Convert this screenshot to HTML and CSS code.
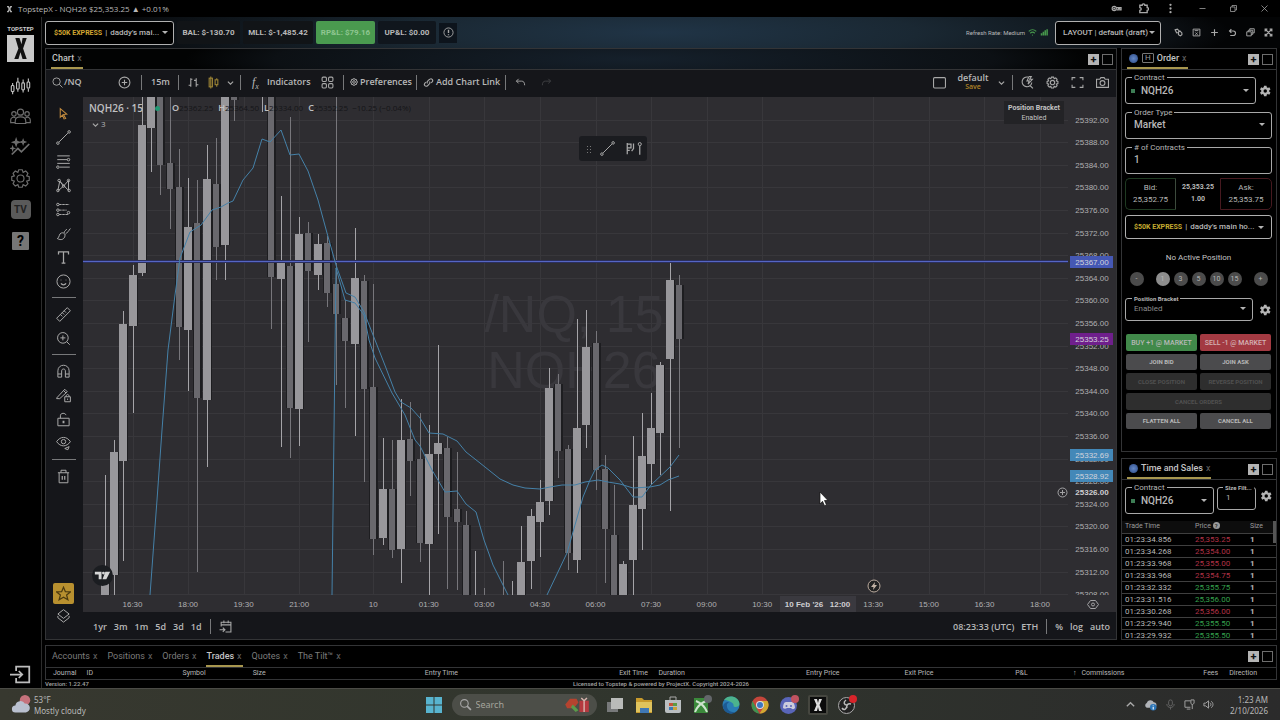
FILE: index.html
```html
<!DOCTYPE html>
<html lang="en">
<head>
<meta charset="UTF-8">
<meta name="viewport" content="width=device-width, initial-scale=1.0">
<title>TopstepX - NQH26</title>
<link rel="stylesheet" href="styles.css">
</head>
<body>

<svg class="sprite" aria-hidden="true">
  <symbol id="gear" viewBox="0 0 24 24"><path fill="currentColor" fill-rule="evenodd" d="M20.500 13.300a8.500 8.500 0 0 0 0-2.600l2.500-1.900-2.400-4.100-2.900 1.200a8.500 8.500 0 0 0-2.200-1.300L15 1.500h-5l-.5 3.100a8.500 8.500 0 0 0-2.200 1.300L4.400 4.700 2 8.800l2.500 1.900a8.500 8.500 0 0 0 0 2.600L2 15.200l2.400 4.100 2.900-1.200a8.500 8.500 0 0 0 2.200 1.300l.5 3.100h5l.5-3.100a8.500 8.500 0 0 0 2.200-1.300l2.900 1.200 2.400-4.100zM12.500 15.500a3.500 3.500 0 1 1 0-7 3.500 3.500 0 0 1 0 7z"/></symbol>
  <symbol id="cog" viewBox="0 0 24 24"><path d="M10 2h4l1 3 3-1.500 2.500 2.500L19 9l3 1v4l-3 1 1.500 3-2.500 2.500L15 19l-1 3h-4l-1-3-3 1.500L3.500 18 5 15l-3-1v-4l3-1-1.500-3L6 3.500 9 5z"/><circle cx="12" cy="12" r="4"/></symbol>
  <symbol id="chev" viewBox="0 0 8 8"><path d="M1 3l3 3 3-3"/></symbol>
</svg>

<header class="titlebar">
  <svg class="favicon" viewBox="0 0 8 10"><path fill="#aaa" d="M0 0h3l1 3 1-3h3v2H7L5.500 5 7 8h1v2H5L4 7l-1 3H0V8h1l1.500-3L1 2H0z"/></svg>
  <span>TopstepX - NQH26 $25,353.25 ▲ +0.01%</span>
  <div class="window-tools">
    <svg class="ico" viewBox="0 0 24 24"><g stroke-width="2.500"><circle cx="7" cy="12" r="4.500"/><circle cx="7" cy="12" r="1"/><path d="M11 10h11v5h-3v-3h-3v3h-4"/></g></svg>
    <svg class="ico" viewBox="0 0 24 24"><path stroke-width="3" d="M4 5h5c0-4 6-4 6 0h5v5c4 0 4 6 0 6v5H4v-5c4 0 4-6 0-6z"/></svg>
    <svg class="ico" viewBox="0 0 24 24"><g fill="currentColor" stroke="none"><circle cx="12" cy="4" r="2.500"/><circle cx="12" cy="12" r="2.500"/><circle cx="12" cy="20" r="2.500"/></g></svg>
    <svg class="ico win" viewBox="0 0 24 24"><path d="M4 12h16"/></svg>
    <svg class="ico win" viewBox="0 0 24 24"><path d="M4 8h12v12H4zM8 8V4h12v12h-4"/></svg>
    <svg class="ico win" viewBox="0 0 24 24"><path d="M4 4l16 16M20 4L4 20"/></svg>
  </div>
</header>

<div class="app">
  <nav class="sidebar">
    <a class="logo" href="#"><b>TOPSTEP</b><svg viewBox="0 0 26 26"><path fill="#c9c9c9" d="M0 0h26v26H0z"/><path fill="#111" d="M8 3h4l2 6 1-6h4l-3.500 10L19 23h-4l-2-6.500L11 23H7l4-10z"/></svg></a>
    <a href="#" aria-label="Chart"><svg class="ico lg hot" viewBox="0 0 24 24"><path d="M3 9v3m0 7v3M9 3v5m0 8v3m6-14v4m0 8v3m6-16v4m0 8v3"/><rect x="1.500" y="12" width="3" height="7" rx="1"/><rect x="7.500" y="8" width="3" height="8" rx="1"/><rect x="13.500" y="9" width="3" height="8" rx="1"/><rect x="19.500" y="8" width="3" height="7" rx="1"/></svg></a>
    <a href="#" aria-label="Community"><svg class="ico lg" viewBox="0 0 24 24"><circle cx="12" cy="7" r="3.500"/><circle cx="4.500" cy="9" r="2.500"/><circle cx="19.500" cy="9" r="2.500"/><path d="M6 20v-3c0-6 12-6 12 0v3zM6 19H.8v-3c0-3 3-4 5.500-2.500M18 19h5.200v-3c0-3-3-4-5.500-2.500"/></svg></a>
    <a href="#" aria-label="Insights"><svg class="ico lg" viewBox="0 0 24 24"><path stroke-width="2" d="M2 20l7-7 4 4 9-9"/><path fill="currentColor" d="M7 2l1 3 3 1-3 1-1 3-1-3-3-1 3-1zM15 3l.7 2 2 .7-2 .7-.7 2-.7-2-2-.7 2-.7zM3 11l.5 1.500 1.500.5-1.500.5L3 15l-.5-1.500L1 13l1.500-.5z"/></svg></a>
    <a href="#" aria-label="Settings"><svg class="ico lg" viewBox="0 0 24 24"><use href="#cog"/></svg></a>
    <a href="#" class="tv">TV</a>
    <a href="#" class="help">?</a>
    <a href="#" class="logout" aria-label="Log out"><svg class="ico lg hot" viewBox="0 0 24 24"><path stroke-width="2" d="M7 8V3h15v18H7v-5M0 12h14m-4-4l4 4-4 4"/></svg></a>
  </nav>

  <main class="workspace">
    <div class="topbar">
      <button class="picker account"><b>$50K EXPRESS</b><span>|</span><span>daddy's mai...</span><i class="caret"></i></button>
      <span class="stat">BAL: $-130.70</span>
      <span class="stat mll">MLL: $-1,485.42</span>
      <span class="stat green">RP&amp;L: $79.16</span>
      <span class="stat plain">UP&amp;L: $0.00</span>
      <button class="iconbtn" aria-label="Info"><svg class="ico" viewBox="0 0 24 24"><circle cx="12" cy="12" r="10"/><path stroke-width="3" d="M12 6v7m0 3v2"/></svg></button>
      <span class="rate">Refresh Rate: Medium</span>
      <svg class="ico signal" viewBox="0 0 24 24"><path stroke-width="3" d="M2 9c6-6 14-6 20 0M6 14c4-4 8-4 12 0M11 19h2"/></svg>
      <svg class="ico signal" viewBox="0 0 24 24"><path stroke-width="4" d="M4 20v-6m5 6V10m5 10V6m5 14V3"/></svg>
      <button class="picker layout">LAYOUT | default (draft)<i class="caret"></i></button>
      <div class="layout-tools">
        <button aria-label="Link"><svg class="ico" viewBox="0 0 24 24"><path stroke-width="3" d="M3 5l6-2 4 4-1 5-5 1zM12 11l4-3 5 5v5l-4 3-5-3z"/></svg></button>
        <button aria-label="Save"><svg class="ico" viewBox="0 0 24 24"><path stroke-width="2.500" d="M3 3h18v18H3zM7 7h10M9 12l6 6m0-6l-6 6"/></svg></button>
        <button aria-label="Add"><svg class="ico" viewBox="0 0 24 24"><path stroke-width="3" d="M12 3v18M3 12h18"/></svg></button>
        <button aria-label="Undo"><svg class="ico" viewBox="0 0 24 24"><path stroke-width="3" d="M9 3L4 8l5 5M4 8h10c8 0 8 12 0 12H6"/></svg></button>
        <button aria-label="Windows"><svg class="ico" viewBox="0 0 24 24"><path stroke-width="2.500" d="M2 10h12v11H2zM6 10V6h12v11h-4M10 6V2h12v11h-4"/></svg></button>
        <button aria-label="Fullscreen"><svg class="ico" viewBox="0 0 24 24"><path stroke-width="3" d="M3 9V3h6M15 3h6v6M21 15v6h-6M9 21H3v-6M4 4l16 16M20 4L4 20"/></svg></button>
      </div>
    </div>

    <div class="panels">
      <section class="panel chart-panel">
        <div class="panel-head glow">
          <a class="tab on" href="#">Chart <i>x</i></a>
          <button class="add">+</button><button class="max" aria-label="Maximize"></button>
        </div>
        <div class="toolbar">
          <button class="sym"><svg class="ico" viewBox="0 0 24 24"><circle cx="10" cy="10" r="8"/><path d="M16 16l7 7"/></svg>/NQ</button>
          <button class="cmp" aria-label="Compare"><svg class="ico md" viewBox="0 0 24 24"><circle cx="12" cy="12" r="10"/><path d="M12 7v10M7 12h10"/></svg></button>
          <hr>
          <button class="tf">15m</button>
          <hr>
          <button class="bars" aria-label="Bars"><svg class="ico md" viewBox="0 0 24 24"><path d="M7 4v16M3 17h4m0-11h3M17 4v16M13 8h4m0 8h4"/></svg></button>
          <button aria-label="Candles"><svg class="ico md gold" viewBox="0 0 24 24"><path d="M7 1v22M18 4v3m0 9v4"/><rect x="4" y="4" width="6" height="16"/><rect x="15" y="7" width="5" height="9"/></svg></button>
          <button aria-label="More"><svg class="ico sm" viewBox="0 0 8 8"><use href="#chev"/></svg></button>
          <hr>
          <button class="ind"><span class="fx">f<sub>x</sub></span>Indicators</button>
          <button class="tpl" aria-label="Templates"><svg class="ico md" viewBox="0 0 24 24"><rect x="2" y="2" width="8" height="8" rx="2"/><rect x="14" y="2" width="8" height="8" rx="2"/><rect x="2" y="14" width="8" height="8" rx="2"/><rect x="14" y="14" width="8" height="8" rx="2"/></svg></button>
          <hr>
          <button class="pref"><svg class="ico mini" viewBox="0 0 24 24"><use href="#cog"/></svg>Preferences</button>
          <hr>
          <button class="link"><svg class="ico" viewBox="0 0 24 24"><path stroke-width="2.500" d="M10 14c-3-3 0-5 2-7s5-5 8-2 0 6-2 8M14 10c3 3 0 5-2 7s-5 5-8 2 0-6 2-8"/></svg>Add Chart Link</button>
          <hr>
          <button class="undo" aria-label="Undo"><svg class="ico" viewBox="0 0 24 24"><path stroke-width="2" d="M8 4L3 9l5 5M3 9h11c5 0 7 3 7 9"/></svg></button>
          <button class="undo off" aria-label="Redo"><svg class="ico" viewBox="0 0 24 24"><path stroke-width="2" d="M16 4l5 5-5 5M21 9H10c-5 0-7 3-7 9"/></svg></button>
          <button class="sq" aria-label="Layout"><svg class="ico md" viewBox="0 0 24 24"><rect x="1" y="3" width="22" height="19" rx="2"/></svg></button>
          <button class="save">default<small>Save</small></button>
          <button aria-label="More layouts"><svg class="ico sm" viewBox="0 0 8 8"><use href="#chev"/></svg></button>
          <hr>
          <div class="right-tools">
            <button aria-label="Quick search"><svg class="ico md" viewBox="0 0 24 24"><path d="M13 2A9 9 0 1 0 20 12M17 18l5 5M15 1l-4 8h4l-2 6 8-9h-5l3-5z"/></svg></button>
            <button aria-label="Settings"><svg class="ico md" viewBox="0 0 24 24"><use href="#cog"/></svg></button>
            <button aria-label="Fullscreen"><svg class="ico md" viewBox="0 0 24 24"><path d="M2 8V3h6M16 3h6v5M22 16v5h-6M8 21H2v-5"/></svg></button>
            <button aria-label="Snapshot"><svg class="ico md" viewBox="0 0 24 24"><path d="M1 6h6l2-3h6l2 3h6v15H1z"/><circle cx="12" cy="13" r="4.500"/></svg></button>
          </div>
        </div>

        <div class="chart-body">
          <div class="drawbar">
            <button aria-label="Cursor"><svg class="ico md orange" viewBox="0 0 24 24"><path stroke-width="2" d="M6 3l12 10-6 1 4 7-3 1-3-7-4 4z"/></svg></button>
            <button aria-label="Trend line"><svg class="ico tool" viewBox="0 0 24 24"><circle cx="3" cy="21" r="2"/><circle cx="21" cy="3" r="2"/><path d="M5 19L19 5"/></svg></button>
            <button aria-label="Fibonacci"><svg class="ico tool" viewBox="0 0 24 24"><path d="M2 3h20M2 9h16M2 15h20M6 21h16"/><circle cx="20" cy="9" r="2"/><circle cx="3" cy="21" r="2"/></svg></button>
            <button aria-label="Patterns"><svg class="ico tool" viewBox="0 0 24 24"><path d="M3 20L6 5l12 13 3 2M6 5l6 8L20 4v15M4 20l8-7"/><circle cx="5" cy="4" r="2"/><circle cx="20" cy="4" r="2"/><circle cx="3" cy="20" r="2"/><circle cx="21" cy="20" r="2"/><circle cx="12" cy="13" r="2"/></svg></button>
            <button aria-label="Projection"><svg class="ico tool" viewBox="0 0 24 24"><path d="M5 4h16M5 13h12M5 20h14" stroke-dasharray="4 1"/><circle cx="3" cy="4" r="2"/><circle cx="3" cy="13" r="2"/><circle cx="3" cy="20" r="2"/><circle cx="20" cy="17" r="2"/></svg></button>
            <button aria-label="Brush"><svg class="ico tool" viewBox="0 0 24 24"><path d="M2 20c4-1 2-8 7-9s7 4 4 8-7 3-11 1zM13 11c1-5 3-3 4-6M15 13c3-2 5-5 8-9"/></svg></button>
            <button aria-label="Text"><svg class="ico tool" viewBox="0 0 24 24"><path stroke-width="2" d="M4 7V3h16v4M12 3v18M9 21h6"/></svg></button>
            <button aria-label="Emoji"><svg class="ico tool" viewBox="0 0 24 24"><circle cx="12" cy="12" r="10.500"/><path stroke-width="2" d="M8 9v1m8-1v1M8 15c2 3 6 3 8 0"/></svg></button>
            <hr>
            <button aria-label="Measure"><svg class="ico tool" viewBox="0 0 24 24"><path d="M1 18L18 1l5 5L6 23zM7 12l3 3m0-6l3 3m0-6l3 3"/></svg></button>
            <button aria-label="Zoom in"><svg class="ico tool" viewBox="0 0 24 24"><circle cx="11" cy="11" r="8.500"/><path d="M17 17l5 5M11 7v8M7 11h8"/></svg></button>
            <hr>
            <button aria-label="Magnet"><svg class="ico tool" viewBox="0 0 24 24"><path d="M3 21V11C3-1 21-1 21 11v10h-6V11c0-4-6-4-6 0v10zM3 16h6m6 0h6"/></svg></button>
            <button aria-label="Lock drawing"><svg class="ico tool" viewBox="0 0 24 24"><path d="M1 16L14 2l4 4L6 17H1zM12 4l4 4M14 14h9v8h-9zM16 14c0-5 5-5 5 0M18.500 17v2"/></svg></button>
            <button aria-label="Lock all"><svg class="ico tool" viewBox="0 0 24 24"><path d="M3 10h18v12H3zM7 10V6c0-5 8-5 9-1"/><path stroke-width="3" d="M12 14v4"/></svg></button>
            <button aria-label="Hide"><svg class="ico tool" viewBox="0 0 24 24"><path d="M1 9c6-9 16-9 22 0-6 9-16 9-22 0zM14 20l7-3-2 5z"/><circle cx="12" cy="9" r="3.500"/></svg></button>
            <hr>
            <button aria-label="Delete"><svg class="ico tool" viewBox="0 0 24 24"><path d="M3 6h18M8 6V2h8v4M5 6v16h14V6"/><path stroke-width="2" d="M10 11v6m4-6v6"/></svg></button>
            <button class="star" aria-label="Favorites"><svg class="ico tool" viewBox="0 0 24 24"><path stroke-width="2" d="M12 2l3 7 8 .5-6 5 2 7.500-7-4-7 4 2-7.500-6-5L9 9z"/></svg></button>
            <button class="layers" aria-label="Objects"><svg class="ico tool" viewBox="0 0 24 24"><path d="M12 1l9 7-9 7-9-7zM3 14l9 7 9-7M3 11v3m18-3v3"/></svg></button>
          </div>

          <div class="chart-main">
            <div class="chart-stage">
              <svg id="chart" viewBox="0 0 1033 515" role="img" aria-label="NQH26 15 minute candles"></svg>
              <div class="legend">
                <div class="row"><span class="name">NQH26 · 15</span><i class="dot"></i><span class="ohlc"><b>O</b>25362.25</span><span class="ohlc"><b>H</b>25364.50</span><span class="ohlc"><b>L</b>25334.00</span><span class="ohlc"><b>C</b>25352.25 &nbsp;−10.25 (−0.04%)</span></div>
                <button class="count"><svg class="ico sm" viewBox="0 0 8 8"><use href="#chev"/></svg>3</button>
              </div>
              <div class="float-tools">
                <i class="grip"></i>
                <svg class="ico tool" viewBox="0 0 24 24"><circle cx="3" cy="21" r="2"/><circle cx="21" cy="3" r="2"/><path d="M5 19L19 5"/></svg>
                <svg class="ico tool wide" viewBox="0 0 28 24"><path stroke-width="2" d="M4 3v18M4 5h6v6H4M4 15h4M14 4v8l-3 4M24 8v14"/><circle cx="24" cy="5" r="2.500"/></svg>
              </div>
              <div class="bracket-note"><b>Position Bracket</b>Enabled</div>
              <svg class="tvmark" viewBox="0 0 22 22"><circle cx="11" cy="11" r="11" fill="#1b1d21"/><path fill="#d6d6d6" d="M3 7h7v8H7v-5H3zM14 7h5l-4 8h-4z"/><circle cx="12" cy="8.500" r="1.500" fill="#d6d6d6"/></svg>
              <svg class="flash" viewBox="0 0 14 14"><circle cx="7" cy="7" r="6" fill="#222" stroke="#b9a99c"/><path fill="#c4b4a6" d="M8 3L4 8h2.500L6 11l4-5H7.500z"/></svg>
              <svg class="pointer" viewBox="0 0 10 14"><path fill="#fff" stroke="#111" stroke-width=".7" d="M1 0l8 8.500H5.500L7.500 13l-2 .8-2-4.500L1 12z"/></svg>
            </div>
            <div class="rangebar">
              <button>1yr</button><button>3m</button><button>1m</button><button>5d</button><button>3d</button><button>1d</button>
              <hr>
              <button aria-label="Go to date"><svg class="ico md" viewBox="0 0 24 24"><path d="M4 12V4h18v18H12M4 9h18M9 1v5m8-5v5M1 18h9m-3-4l4 4-4 4"/></svg></button>
              <span class="clock">08:23:33 (UTC)</span><button>ETH</button>
              <hr>
              <button>%</button><button>log</button><button>auto</button>
            </div>
          </div>
        </div>
      </section>

      <div class="side">
        <section class="panel order">
          <div class="panel-head">
            <a class="tab on" href="#"><i class="globe"></i><i class="hbox">H</i>Order <i>x</i></a>
            <button class="add">+</button><button class="max" aria-label="Maximize"></button>
          </div>
          <div class="order-body">
            <div class="line">
              <div class="field has-dot"><label for="contract">Contract</label><select id="contract"><option>NQH26</option></select><i class="caret"></i></div>
              <button class="gear" aria-label="Contract settings"><svg viewBox="0 0 24 24"><use href="#gear"/></svg></button>
            </div>
            <div class="field"><label for="otype">Order Type</label><select id="otype"><option>Market</option></select><i class="caret"></i></div>
            <div class="field"><label for="qty"># of Contracts</label><input id="qty" type="text" value="1"></div>
            <div class="quote">
              <div class="bid">Bid:<span>25,352.75</span></div>
              <div class="last">25,353.25<span>1.00</span></div>
              <div class="ask">Ask:<span>25,353.75</span></div>
            </div>
            <button class="picker account"><b>$50K EXPRESS</b><span>|</span><span>daddy's main ho...</span><i class="caret"></i></button>
            <p class="nopos">No Active Position</p>
            <div class="sizes">
              <button class="minus">-</button><button class="cur">1</button><button>3</button><button>5</button><button>10</button><button>15</button><button class="plus">+</button>
            </div>
            <div class="line bracket">
              <div class="field small"><label for="bracket">Position Bracket</label><select id="bracket"><option>Enabled</option></select><i class="caret"></i></div>
              <button class="gear" aria-label="Bracket settings"><svg viewBox="0 0 24 24"><use href="#gear"/></svg></button>
            </div>
            <div class="actions">
              <button class="buy">BUY +1 @ MARKET</button><button class="sell">SELL -1 @ MARKET</button>
              <button>JOIN BID</button><button>JOIN ASK</button>
              <button class="low" disabled>CLOSE POSITION</button><button class="low" disabled>REVERSE POSITION</button>
              <button class="low full" disabled>CANCEL ORDERS</button>
              <button>FLATTEN ALL</button><button>CANCEL ALL</button>
            </div>
          </div>
        </section>

        <section class="panel sales">
          <div class="panel-head">
            <a class="tab on" href="#"><i class="globe"></i>Time and Sales <i>x</i></a>
            <button class="add">+</button><button class="max" aria-label="Maximize"></button>
          </div>
          <div class="line sales-filter">
            <div class="field has-dot"><label for="contract2">Contract</label><select id="contract2"><option>NQH26</option></select><i class="caret"></i></div>
            <div class="field small filt"><label for="sizef">Size Filt...</label><input id="sizef" type="text" value="1"></div>
            <button class="gear" aria-label="Settings"><svg viewBox="0 0 24 24"><use href="#gear"/></svg></button>
          </div>
          <div class="tape">
            <table>
              <thead><tr><th>Trade Time</th><th>Price <i class="q">?</i></th><th>Size</th></tr></thead>
              <tbody>
                <tr><td>01:23:34.856</td><td class="dn">25,353.25</td><td>1</td></tr>
                <tr><td>01:23:34.268</td><td class="dn">25,354.00</td><td>1</td></tr>
                <tr><td>01:23:33.968</td><td class="dn">25,355.00</td><td>1</td></tr>
                <tr><td>01:23:33.968</td><td class="dn">25,354.75</td><td>1</td></tr>
                <tr><td>01:23:32.332</td><td class="up">25,355.75</td><td>1</td></tr>
                <tr><td>01:23:31.516</td><td class="up">25,356.00</td><td>1</td></tr>
                <tr><td>01:23:30.268</td><td class="dn">25,356.00</td><td>1</td></tr>
                <tr><td>01:23:29.940</td><td class="up">25,355.50</td><td>1</td></tr>
                <tr><td>01:23:29.932</td><td class="up">25,355.50</td><td>1</td></tr>
              </tbody>
            </table>
            <i class="thumb"></i>
          </div>
        </section>
      </div>
    </div>

    <section class="panel bottom">
      <div class="panel-head">
        <a class="tab" href="#">Accounts <i>x</i></a>
        <a class="tab" href="#">Positions <i>x</i></a>
        <a class="tab" href="#">Orders <i>x</i></a>
        <a class="tab on" href="#">Trades <i>x</i></a>
        <a class="tab" href="#">Quotes <i>x</i></a>
        <a class="tab" href="#">The Tilt™ <i>x</i></a>
        <button class="add">+</button><button class="max" aria-label="Maximize"></button>
      </div>
      <table class="trades">
        <thead><tr><th>Journal</th><th>ID</th><th>Symbol</th><th>Size</th><th>Entry Time</th><th>Exit Time</th><th>Duration</th><th>Entry Price</th><th>Exit Price</th><th>P&amp;L</th><th><span class="sort">↑</span>Commissions</th><th>Fees</th><th>Direction</th></tr></thead>
      </table>
    </section>
    <footer class="foot"><span>Version: 1.22.47</span><span>Licensed to Topstep &amp; powered by ProjectX. Copyright 2024-2026</span><span></span></footer>
  </main>
</div>

<div class="taskbar">
  <div class="weather">
    <svg viewBox="0 0 24 24"><circle cx="16" cy="7" r="6" fill="#c5727c"/><path fill="#b9c0cf" d="M5 21a4 4 0 0 1 0-8 6 6 0 0 1 11-2 5 5 0 0 1 1 10z"/></svg>
    <div>53°F<br>Mostly cloudy</div>
  </div>
  <div class="apps">
    <svg viewBox="0 0 20 20"><path fill="#58b4cf" d="M2 2h7.500v7.500H2zM10.500 2H18v7.500h-7.500zM2 10.500h7.500V18H2zM10.500 10.500H18V18h-7.500z"/></svg>
    <div class="search">
      <svg class="ico md" viewBox="0 0 24 24"><circle cx="10" cy="10" r="7"/><path stroke-width="3" d="M15 15l7 7"/></svg>
      <input type="text" placeholder="Search" aria-label="Search">
      <svg class="gift" viewBox="0 0 28 18"><path fill="#b5432f" d="M1 9l5-6h7l2 4-5 6H3z"/><path fill="#5a9a4a" d="M9 9l6 6-3 2-5-5z"/><path fill="#b53a40" d="M16 5h10v12H16z"/><path stroke="#d8b5ae" stroke-width="1.500" fill="none" d="M21 5v12M18 2l3 3 3-3"/></svg>
    </div>
    <svg viewBox="0 0 20 20"><path fill="#77797a" d="M2 7h11v10H2z"/><path fill="#b9bbb9" d="M6 3h12v11H6z"/></svg>
    <svg viewBox="0 0 20 20"><path fill="#c79a2c" d="M2 3h6l2 2h8v13H2z"/><path fill="#dfc35d" d="M2 7h16v10H2z"/><path fill="#3f78b5" d="M6 13h9v5H6z"/></svg>
    <svg viewBox="0 0 20 20"><path fill="#b9bec0" d="M2 5h16v11q0 2-2 2H4q-2 0-2-2z"/><path fill="none" stroke="#aaa" d="M7 5V2h6v3"/><path fill="#c65338" d="M6 8h4v3H6z"/><path fill="#5d9a42" d="M10 8h4v3h-4z"/><path fill="#3a79b4" d="M6 12h4v3H6z"/><path fill="#c9a23a" d="M10 12h4v3h-4z"/></svg>
    <svg viewBox="0 0 20 20"><path fill="#3b8a3b" d="M2 3h14v15H2z"/><path stroke="#cfe3cf" stroke-width="2" fill="none" d="M3 17C5 12 9 8 14 6M4 6c5 2 9 6 11 11"/><circle cx="16" cy="4" r="4" fill="#63666a"/></svg>
    <svg viewBox="0 0 20 20"><circle cx="10" cy="10" r="8.500" fill="#2a7cb4"/><path fill="#4cb38d" d="M3 5c4-6 15-4 15.500 4 0 3-5 4-6 2 1-3-5-6-9.500-6z"/><path fill="#1d5a94" d="M6 9c-1 6 4 9 9 8-6 4-12 0-13-5 0-3 2-5 6-5z"/></svg>
    <svg viewBox="0 0 20 20"><circle cx="10" cy="10" r="8.500" fill="#c4463b"/><path fill="#3f9150" d="M2.500 6l5 9 2 3.500A8.500 8.500 0 0 1 2.500 6z"/><path fill="#d0a932" d="M10 6h7.500a8.500 8.500 0 0 1-8 12.500l4-6z"/><circle cx="10" cy="10" r="4" fill="#ddd"/><circle cx="10" cy="10" r="3" fill="#3c75c0"/></svg>
    <svg viewBox="0 0 20 20"><circle cx="9.500" cy="10.500" r="8.500" fill="#5965b8"/><path fill="#ccd" d="M4 13c0-3 1-6 3-6h6c2 0 3 4 3 6-2 2-3 1-4 0H8c-1 1-3 1-4 0z"/><circle cx="7.500" cy="11" r="1" fill="#5965b8"/><circle cx="12" cy="11" r="1" fill="#5965b8"/><circle cx="16" cy="4" r="4" fill="#c05360"/></svg>
    <svg class="running" viewBox="0 0 20 20"><path fill="#0b0b0b" d="M2 2h16v16H2z"/><path fill="#ddd" d="M6 4h3l1 4 1-4h3l-2.500 6L14 16h-3l-1-4-1 4H6l2.500-6z"/></svg>
    <svg viewBox="0 0 20 20"><circle cx="9.500" cy="10.500" r="8" fill="#222" stroke="#aaa"/><path fill="none" stroke="#bbb" stroke-width="1.500" d="M9 5c-3 2-2 5 1 5M14 9c-3-1-5 1-4 4M5 13c2 3 5 1 5-3"/><circle cx="16" cy="4" r="4" fill="#d8242a"/></svg>
  </div>
  <div class="tray">
    <svg class="ico" viewBox="0 0 24 24"><path stroke-width="3" d="M4 16l8-8 8 8"/></svg>
    <svg class="cloud" viewBox="0 0 24 24"><path fill="#b0b3b8" d="M5 18a5 5 0 0 1 0-9 7 7 0 0 1 13-1 5 5 0 0 1 0 10z"/><circle cx="17" cy="17" r="6" fill="#2d76b8"/><path stroke="#fff" stroke-width="2" d="M17 13v1m0 2v5"/></svg>
    <svg class="ico dim" viewBox="0 0 24 24"><rect x="8" y="2" width="8" height="13" rx="4"/><path stroke-width="2" d="M4 11c0 10 16 10 16 0M12 18v5"/></svg>
    <svg class="ico" viewBox="0 0 24 24"><path stroke-width="2" d="M14 4H2v14h12M6 22h8M18 22v-9M15 2h7v7l-4 4-3-4z"/></svg>
    <svg class="ico" viewBox="0 0 24 24"><path stroke-width="2" d="M2 9v6h4l6 5V4L6 9zM15 8c3 2 3 6 0 8M18 5c5 4 5 10 0 14"/></svg>
    <div class="date">1:23 AM<br>2/10/2026</div>
  </div>
</div>

<script src="script.js"></script>
</body>
</html>
```
FILE: styles.css
```css
* {
  box-sizing: border-box;
}

body {
  margin: 0;
  min-height: 100vh;
  display: flex;
  flex-direction: column;
  background: #000;
  color: #b8b8b8;
  font-family: Roboto, sans-serif;
  font-size: 8px;
  line-height: 12px;
}

button {
  font: inherit;
  color: inherit;
  background: none;
  border: 0;
  padding: 0;
}

a {
  color: inherit;
  text-decoration: none;
}

hr {
  border: 0;
  margin: 0;
  background: #77787a;
}

i {
  font-style: normal;
}

.sprite {
  display: none;
}

/* icons */
.ico {
  display: block;
  width: 11px;
  height: 11px;
  flex: none;
  fill: none;
  stroke: currentColor;
  stroke-width: 2;
  color: #a8a8a8;
}
.ico.md { width: 13px; height: 13px; }
.ico.tool { width: 15px; height: 15px; stroke-width: 1.6; }
.ico.wide { width: 19px; }
.ico.lg { width: 21px; height: 21px; stroke-width: 1.3; color: #6e6e6e; }
.ico.hot { color: #bdbdbd; }
.ico.sm { width: 7px; height: 7px; stroke-width: 1.3; }
.ico.mini { width: 8px; height: 8px; stroke-width: 3; }
.ico.gold { color: #9c8435; }
.ico.orange { color: #c08a3e; }
.ico.dim { color: #666; }

.caret {
  border: 3px solid transparent;
  border-top-color: #b4b4b4;
  border-bottom: 0;
  flex: none;
}

/* window title */
.titlebar {
  height: 17px;
  display: flex;
  align-items: center;
  padding: 0 11px 0 7px;
  gap: 6px;
  font-family: "Open Sans", sans-serif;
}
.favicon { width: 5px; height: 8px; }
.window-tools { margin-left: auto; display: flex; gap: 16px; }
.window-tools .ico { width: 11px; }
.window-tools .win { width: 9px; margin-left: 6px; }

.app {
  flex: 1;
  display: grid;
  grid-template-columns: 42px 1fr;
}

.sidebar {
  border-right: 1px solid #2c2c2c;
  display: flex;
  flex-direction: column;
  align-items: center;
  padding-top: 6px;
  gap: 10px;
}
.sidebar .logo {
  display: flex;
  flex-direction: column;
  align-items: center;
  margin-bottom: 3px;
}
.logo b { font-size: 6px; color: #ccc; line-height: 12px; }
.logo svg { width: 27px; height: 27px; }
.sidebar .tv,
.sidebar .help {
  width: 20px;
  height: 19px;
  border-radius: 4px;
  background: #5a5a5a;
  color: #222;
  font-size: 10px;
  font-weight: bold;
  line-height: 19px;
  text-align: center;
  margin-top: 1px;
}
.sidebar .help { width: 17px; height: 18px; border-radius: 1px; color: #000; font-size: 14px; background: #767676; margin-top: 3px; }
.sidebar .logout { margin-top: auto; margin-bottom: 3px; }

.workspace {
  padding: 0 3px;
  display: flex;
  flex-direction: column;
  min-width: 0;
}

/* top bar */
.topbar {
  height: 31px;
  margin: 0 -3px;
  padding: 0 7px 0 3px;
  display: flex;
  align-items: center;
  gap: 3px;
  background: radial-gradient(ellipse 46% 200% at 50% 50%, #203446, #1a2833 45%, #0b0f13 90%, #030405);
  font-weight: bold;
  white-space: nowrap;
}
.picker {
  height: 24px;
  border: 1px solid #b0b0b0;
  border-radius: 3px;
  background: #000;
  display: flex;
  align-items: center;
  gap: 3px;
  padding: 0 7px 0 8px;
  font-weight: 500;
  white-space: nowrap;
}
.picker .caret { margin-left: auto; }
.account { width: 129px; }
.account b { color: #d2a632; font-size: 7px; }
.stat {
  height: 23px;
  width: 63px;
  line-height: 23px;
  text-align: center;
  background: #111417;
  border-radius: 2px;
}
.stat.mll { width: 70px; }
.stat.green { width: 59px; background: #4a9a4f; color: #8fc691; }
.stat.plain { width: 58px; background: #10161d; }
.iconbtn { width: 18px; height: 20px; background: #0d141c; display: grid; place-items: center; }
.rate { margin-left: auto; font-size: 6px; font-weight: normal; }
.ico.signal { width: 9px; height: 9px; color: #47984c; }
.layout { width: 106px; margin: 0 10px 0 3px; padding: 0 5px 0 7px; gap: 1px; }
.layout-tools { display: flex; gap: 9px; }
.layout-tools .ico { width: 9px; height: 9px; }

/* panels */
.panels {
  display: grid;
  grid-template-columns: 1fr 156px;
  gap: 4px;
}
.panel { border: 1px solid #333436; min-width: 0; }
.panel-head {
  height: 21px;
  display: flex;
  align-items: center;
  gap: 3px;
  padding-right: 3px;
  border-bottom: 1px solid #333436;
  font-size: 9px;
}
.glow { background: radial-gradient(ellipse 42% 200% at 55% 50%, #15202b, #0c1014 80%, #020303); }
.tab {
  align-self: stretch;
  display: flex;
  align-items: center;
  gap: 3px;
  margin-left: 5px;
  padding: 0 1px;
  color: #7c7c7c;
  border-bottom: 2px solid transparent;
}
.tab.on { color: #c4c4c4; border-bottom-color: #a8974f; font-weight: 500; }
.tab i { color: #666; font-weight: normal; }
.tab .globe { width: 9px; height: 9px; border-radius: 50%; margin-left: 1px; background: radial-gradient(#6386c4, #2c4b86); }
.tab .hbox { border: 1px solid #777; border-radius: 1px; font-size: 8px; line-height: 8px; padding: 0 2px; margin-left: 1px; color: #999; }
.add {
  margin-left: auto;
  width: 11px;
  height: 11px;
  background: #b4b4b4;
  color: #111;
  font-weight: bold;
  font-size: 11px;
  line-height: 11px;
}
.max { width: 11px; height: 11px; border: 1px solid #6d6d6d; }

/* chart */
.chart-panel { background: #15161a; display: flex; flex-direction: column; }
.toolbar,
.rangebar {
  height: 27px;
  display: flex;
  align-items: center;
  font-family: "Open Sans", sans-serif;
  font-size: 9px;
  font-weight: 600;
}
.toolbar hr,
.rangebar hr { width: 1px; height: 15px; }
.toolbar button { display: flex; align-items: center; }
.toolbar { padding: 0 0 3px 6px; white-space: nowrap; }
.toolbar .sym { gap: 1px; width: 66px; }
.toolbar .cmp { width: 23px; }
.toolbar .tf { width: 36px; padding-left: 9px; }
.toolbar .bars { margin: 0 7px 0 8px; }
.toolbar .bars + button { margin-right: 7px; }
.toolbar .bars + button + button { margin-right: 6px; }
.fx { font: italic 12px/12px "Liberation Serif", serif; width: 15px; text-align: left; }
.fx sub { font-size: 8px; line-height: 0; }
.toolbar .ind { margin-left: 11px; width: 69px; }
.toolbar .tpl { margin-right: 9px; }
.toolbar .pref { width: 72px; padding-left: 6px; gap: 2px; }
.toolbar .link { width: 88px; padding-left: 6px; gap: 2px; }
.toolbar .undo { margin-left: 9px; width: 17px; }
.toolbar .off { opacity: .3; }
.toolbar .sq { margin-left: auto; }
.toolbar .save { flex-direction: column; width: 30px; margin: 0 10px 0 12px; line-height: 10px; }
.save small { font-size: 7px; line-height: 8px; color: #b08326; }
.toolbar .save + button { margin-right: 7px; }
.right-tools { display: flex; gap: 12px; padding: 0 7px 0 8px; }

.chart-body { display: flex; }
.drawbar {
  width: 37px;
  padding: 4px 2px 11px 0;
  display: flex;
  flex-direction: column;
  align-items: center;
}
.drawbar button { width: 24px; height: 24px; display: grid; place-items: center; }
.drawbar hr { width: 24px; height: 1px; margin: 4px 0; }
.drawbar .star { margin-top: auto; width: 21px; height: 21px; background: #b8902f; border-radius: 2px; }
.star .ico { color: #4b3a10; }
.chart-main { flex: 1; min-width: 0; }
.chart-stage { position: relative; background: #2e2d31; }
.chart-stage #chart { display: block; width: 100%; height: auto; }
#chart text { font-family: "Liberation Sans", sans-serif; font-size: 8px; fill: #b0b0b2; text-anchor: middle; }
#chart .now { font-weight: bold; fill: #cfcfd2; }
#chart .tag { fill: #d4d4dc; }
#chart .mark { font-size: 52px; fill: #39383d; }

.legend {
  position: absolute;
  left: 6px;
  top: 4px;
  font-family: "Open Sans", sans-serif;
}
.legend .row { display: flex; align-items: center; gap: 8px; line-height: 14px; }
.legend .name { font-weight: 600; font-size: 10px; width: 58px; white-space: nowrap; color: #c0c0c2; }
.legend .dot { width: 5px; height: 5px; border-radius: 50%; background: #239874; margin-right: 4px; }
.legend .ohlc { color: #151518; white-space: nowrap; margin-right: -3px; }
.legend .ohlc b { color: #c0c0c2; font-size: 9px; font-weight: 600; }
.legend .count { display: flex; align-items: center; gap: 2px; margin: 3px; }

.float-tools {
  position: absolute;
  left: 48%;
  top: 39px;
  width: 68px;
  height: 25px;
  background: #1b1c20;
  border-radius: 3px;
  display: flex;
  align-items: center;
  justify-content: space-between;
  padding: 0 4px 0 7px;
}
.grip { width: 5px; height: 8px; background: radial-gradient(circle, #777 1px, transparent 1px) 0 0 / 3px 3px; }
.bracket-note {
  position: absolute;
  right: 52px;
  top: 4px;
  width: 60px;
  height: 23px;
  background: #232326;
  font-size: 7px;
  line-height: 10px;
  text-align: center;
  padding-top: 2px;
  color: #c4c4c4;
}
.bracket-note b { display: block; white-space: nowrap; }
.tvmark { position: absolute; left: 9px; top: 468px; width: 21px; }
.flash { position: absolute; left: 784px; top: 482px; width: 14px; }
.pointer { position: absolute; left: 736px; top: 395px; width: 10px; }

.rangebar { padding: 2px 6px 0 10px; gap: 7px; }
.rangebar hr { margin: 0 1px; }
.rangebar .clock { margin-left: auto; }

/* order panel */
.side { display: flex; flex-direction: column; gap: 6px; }
.order { flex: 1; }
.order-body { padding: 7px 4px 0 3px; }
.line { display: flex; align-items: center; gap: 2px; }
.field {
  position: relative;
  flex: 1;
  min-width: 0;
  height: 27px;
  margin-bottom: 8px;
  border: 1px solid #a8a8a8;
  border-radius: 3px;
  display: flex;
  align-items: center;
  padding: 0 6px 2px 8px;
}
.field label {
  position: absolute;
  left: 6px;
  top: -6px;
  padding: 0 2px;
  background: #000;
  line-height: 11px;
  white-space: nowrap;
}
.field select,
.field input {
  appearance: none;
  flex: 1;
  width: 100%;
  min-width: 0;
  border: 0;
  padding: 0;
  background: none;
  color: #b8b8b8;
  font: 500 10px/14px Roboto, sans-serif;
}
.has-dot { gap: 6px; padding: 0 6px 0 5px; }
.has-dot::before { content: ""; width: 4px; height: 4px; background: #3d7d54; }
.gear { width: 14px; color: #b4b4b4; margin-bottom: 8px; padding-left: 1px; }
.gear svg { display: block; width: 12px; height: 12px; }
.field.small { height: 23px; }
.field.small label { font-size: 6px; font-weight: bold; }
.field.small select { font-size: 8px; font-weight: normal; color: #8b8b8b; }
.quote { display: grid; grid-template-columns: 51px 1fr 52px; height: 32px; text-align: center; margin-top: -4px; }
.quote span { display: block; }
.quote div { padding-top: 3px; }
.bid { border: 1px solid #1f3a22; border-right-color: #3c4a3c; border-radius: 5px 0 0 5px; }
.ask { border: 1px solid #46191f; border-radius: 0 5px 5px 0; }
.last { font-weight: bold; font-size: 7px; }
.order .account { width: 100%; margin-top: 5px; }
.order .account b { color: #c5ab31; }
.nopos { margin: 13px 0 8px; text-align: center; font-size: 8px; color: #c4c4c4; }
.sizes { display: flex; gap: 4px; justify-content: center; margin-bottom: 12px; }
.sizes button { width: 14px; height: 14px; border-radius: 50%; background: #4b4b4b; line-height: 14px; font-size: 7px; }
.sizes .cur { background: #8d8d8d; }
.sizes .minus { margin-right: 8px; }
.sizes .plus { margin-left: 8px; }
.bracket { gap: 5px; }
.actions { display: grid; grid-template-columns: 1fr 1fr; gap: 3px; padding: 5px 1px 0; }
.actions button { height: 16px; border-radius: 2px; background: #4b4b4d; font-size: 6px; font-weight: bold; white-space: nowrap; }
.actions .buy, .actions .sell { height: 17px; font-size: 7px; font-weight: 500; }
.actions .buy { background: #41894a; }
.actions .sell { background: #a33a42; color: #d4b2b4; }
.actions .low { height: 17px; background: #2e2e2e; color: #505050; }
.actions .full { grid-column: 1 / 3; }

/* time and sales */
.sales { height: 182px; overflow: hidden; }
.sales-filter { padding: 7px 3px 0 3px; gap: 3px; align-items: flex-start; }
.sales-filter .field { margin-bottom: 7px; }
.sales-filter .filt { flex: none; width: 39px; }
.sales-filter .filt label { left: 5px; }
.sales-filter .gear { margin-top: 3px; }
.filt input { font-size: 8px; font-weight: normal; }
.tape { position: relative; }
.tape table { width: 100%; border-collapse: collapse; table-layout: fixed; }
.tape th { height: 12px; padding: 0 0 0 3px; text-align: left; font-weight: normal; font-size: 7px; line-height: 11px; color: #9b9b9b; background: #0d0d0d; }
.tape td { height: 12px; padding: 0 0 0 3px; border-top: 1px solid #3f3f3f; line-height: 11px; }
.tape th:nth-child(1) { width: 70px; }
.tape th:nth-child(2) { width: 55px; }
.tape td:nth-child(3) { font-weight: bold; }
.q { display: inline-block; width: 7px; height: 7px; border-radius: 50%; background: #999; color: #000; font-size: 6px; line-height: 7px; text-align: center; }
.tape .dn { color: #b23246; }
.tape .up { color: #35a04d; }
.thumb { position: absolute; right: 0; top: 0; width: 3px; height: 22px; background: #555; }

/* bottom */
.bottom { margin-top: 5px; }
.bottom .panel-head { height: 22px; }
.trades { width: 100%; border-collapse: collapse; table-layout: fixed; }
.trades th { height: 11px; padding: 0; text-align: left; font-size: 7px; font-weight: normal; line-height: 11px; color: #b8b8b8; white-space: nowrap; }
.trades th:nth-child(1) { width: 3.3%; padding-left: 7px; }
.trades th:nth-child(2) { width: 7.8%; }
.trades th:nth-child(3) { width: 5.7%; }
.trades th:nth-child(4) { width: 14%; }
.trades th:nth-child(5) { width: 15.8%; }
.trades th:nth-child(6) { width: 3.2%; }
.trades th:nth-child(7) { width: 12%; }
.trades th:nth-child(8) { width: 8%; }
.trades th:nth-child(9) { width: 9%; }
.trades th:nth-child(10) { width: 4.7%; }
.trades th:nth-child(11) { width: 10.6%; }
.trades th:nth-child(12) { width: 2.1%; }
.sort { font-weight: bold; margin-right: 5px; }

.foot { display: grid; grid-template-columns: 1fr auto 1fr; font-size: 6px; line-height: 7px; color: #a4a4a4; font-weight: 500; }

/* taskbar */
.taskbar {
  height: 32px;
  display: grid;
  grid-template-columns: 1fr auto 1fr;
  align-items: center;
  background: linear-gradient(90deg, #37382f, #30352d 50%, #2b2b2b);
  border-top: 1px solid #4b4b46;
  font: 8px/11px "Noto Sans", sans-serif;
}
.weather { display: flex; gap: 2px; align-items: center; padding-left: 11px; }
.weather svg { width: 21px; height: 21px; }
.apps { display: flex; align-items: center; gap: 9px; }
.apps > svg { width: 20px; height: 20px; }
.apps .running { background: #45463f; border-radius: 2px; }
.search { width: 145px; height: 22px; border-radius: 11px; background: #4c4e48; display: flex; align-items: center; gap: 4px; padding: 0 6px 0 7px; margin: 0 -1px 0 -1px; }
.search input { flex: 1; min-width: 0; border: 0; padding: 0; background: none; font: 9px/12px "Noto Sans", sans-serif; }
.search input::placeholder { color: #a4a49c; }
.gift { width: 27px; height: 17px; }
.tray { display: flex; align-items: center; justify-content: flex-end; gap: 8px; padding-right: 12px; }
.cloud { width: 13px; height: 13px; }
.date { text-align: right; margin-left: 8px; }
```
FILE: script.js
```js
// origin of the chart area, candle spacing and price grid
const OX = 83, OY = 97, STEP = 9.26, X0 = 49.5;
const PLOT_W = 985, PLOT_H = 498, PRICE_X = 1009;
const svg = document.getElementById("chart");

// slot, 1 = up / 0 = down, high, open/close top, bottom, low
const candles = [
  [-3,1,475,578,595,595],[-2,1,440,452,575,595],[-1,1,311,324,461,561],[0,1,265,275,326,413],
  [1,1,97,125,273,276],[2,1,97,97,128,172],[3,0,97,97,165,195],[4,0,97,163,189,229],
  [5,0,149,187,327,360],[6,1,178,227,330,391],[7,0,180,223,398,572],[8,1,145,179,400,467],
  [9,0,138,184,247,280],[10,1,97,97,245,280],[11,0,97,97,100,121],[14,1,97,97,97,112],
  [15,0,97,97,277,329],[16,1,196,263,279,447],[17,0,117,266,408,458],[18,1,217,234,409,446],
  [19,0,222,233,271,342],[20,1,234,244,275,290],[21,0,236,243,293,307],[22,0,97,284,314,385],
  [23,0,300,318,341,408],[24,1,228,278,344,436],[25,0,275,281,389,482],[26,0,284,387,539,555],
  [27,1,438,489,538,545],[28,0,440,489,550,558],[29,1,399,440,549,583],[30,0,402,439,461,496],
  [31,0,413,459,543,562],[32,1,425,454,544,595],[33,1,345,443,454,534],[34,0,437,448,517,589],
  [35,0,452,509,522,590],[36,0,511,525,595,595],[37,1,551,595,595,595],[38,0,588,595,595,595],
  [40,0,561,595,595,595],[41,1,581,595,595,595],[42,1,526,562,595,595],[43,1,509,516,561,589],
  [44,1,480,502,522,557],[45,1,368,388,501,515],[46,0,374,384,451,478],[47,0,445,449,553,570],
  [48,1,319,428,560,573],[49,1,310,347,425,448],[50,0,331,343,470,490],[51,0,455,469,529,583],
  [52,0,485,535,595,595],[53,1,561,564,595,595],[54,1,436,505,560,595],[55,1,413,456,509,550],
  [56,1,393,428,464,484],[57,1,362,365,433,475],[58,1,261,280,359,511],[59,0,275,285,339,448]
];

const averages = [
  "150,595 157,500 162,430 168,350 175,295 180,258 190,232 201,225 212,210 221,207 228,203 233,201 243,180 253,168 262,139 270,142 281,130 290,155 299,154 308,171 318,200 327,233 336,265 346,293 355,297 364,312 375,340 386,368 395,392 401,402 411,408 420,418 429,433 443,434 457,441 466,452 480,463 500,479 513,485 525,488 540,489 550,487 562,485 575,485 585,482 598,480 608,482 620,484 633,488 650,487 660,485 668,480 679,476",
  "332,595 335,350 336,268 345,300 355,303 364,315 369,340 375,358 392,393 405,415 415,440 420,446 432,470 445,492 457,491 466,504 476,512 484,540 493,565 508,595",
  "547,595 567,553 575,525 583,497 590,480 595,470 602,465 608,468 620,480 633,497 642,497 651,485 670,467 679,455"
];

const times = [[0,"16:30"],[6,"18:00"],[12,"19:30"],[18,"21:00"],[26,"10"],[32,"01:30"],[38,"03:00"],[44,"04:30"],[50,"06:00"],[56,"07:30"],[62,"09:00"],[68,"10:30"],[80,"13:30"],[86,"15:00"],[92,"16:30"],[98,"18:00"]];

function rect(x, y, w, h, fill) {
  return `<rect x="${x}" y="${y}" width="${w}" height="${h}" fill="${fill}"/>`;
}

let out = "";

// grid
for (let i = 0; i < 22; i++) {
  out += rect(0, Math.round(22.5 + i * 22.6), PLOT_W, 1, "#38373b");
}
times.forEach(([k]) => {
  out += rect(Math.round(X0 + k * STEP), 0, 1, PLOT_H, "#38373b");
});

out += `<text class="mark" x="491" y="235">/NQ, 15</text><text class="mark" x="491" y="291">NQH26</text>`;

candles.forEach(([k, up, high, top, bottom, low]) => {
  const x = Math.round(X0 + k * STEP);
  out += rect(x, high - OY, 1, low - high, up ? "#a5a4a8" : "#77767b");
  if (bottom > top) {
    out += rect(x - 4, top - OY, 9, bottom - top, "#1d1d20");
    out += up ? rect(x - 4, top - OY, 8, bottom - top, "#98979b") : rect(x - 3, top - OY, 6, bottom - top, "#69686d");
  }
});

// position line with a darker edge
out += rect(0, 163, PLOT_W, 3, "#2c2f5c") + rect(0, 164, PLOT_W, 1, "#5566c4");

averages.forEach(p => {
  out += `<polyline transform="translate(${-OX} ${-OY})" points="${p}" fill="none" stroke="#4581a8"/>`;
});

// time axis
out += rect(0, PLOT_H, 1033, 17, "#2e2d31");
times.forEach(([k, t]) => {
  out += `<text x="${X0 + k * STEP}" y="510">${t}</text>`;
});
out += rect(697, PLOT_H + 1, 76, 16, "#3a393f");
out += `<text class="now" x="721" y="510">10 Feb '26</text><text class="now" x="757" y="510">12:00</text>`;
out += `<g fill="none" stroke="#a3a3a5"><path d="M1007.500 503.500h5l3 4-3 4h-5l-3-4z"/><circle cx="1010" cy="507.500" r="1.500"/></g>`;

// price axis
for (let i = 0; i < 21; i++) {
  out += `<text x="${PRICE_X}" y="${Math.round(25.5 + i * 22.6)}">${25392 - i * 4}.00</text>`;
}
out += `<svg y="480" width="1033" height="18"><text x="${PRICE_X}" y="20">25308.00</text></svg>`;
[["25367.00", 165, "#4558b4"], ["25353.25", 242, "#6f1f8c"], ["25332.69", 358, "#4388b8"], ["25328.92", 379, "#4388b8"]].forEach(([t, y, c]) => {
  out += rect(987, y - 6, 43, 12, c) + `<text class="tag" x="${PRICE_X}" y="${y + 3}">${t}</text>`;
});
out += rect(987, 389, 43, 12, "#2e2d31") + `<text class="now" x="${PRICE_X}" y="398">25326.00</text>`;
out += `<g fill="none" stroke="#a3a3a5"><circle cx="979.500" cy="395.500" r="4.500"/><path d="M977 395.500h5M979.500 393v5"/></g>`;

svg.innerHTML = out;
```
